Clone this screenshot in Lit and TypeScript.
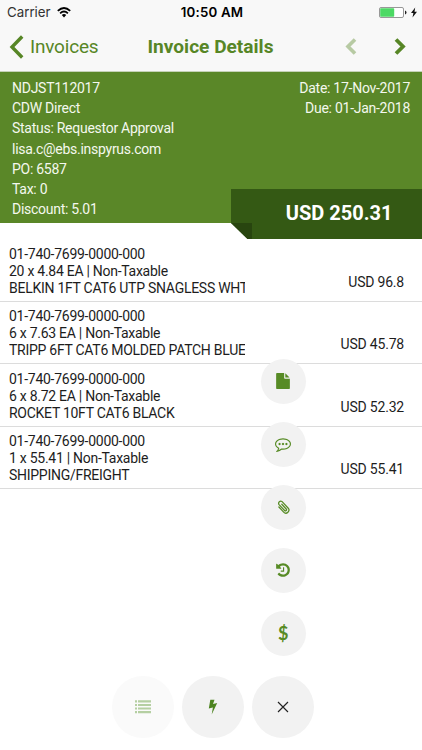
import { LitElement, html, css, svg } from "lit";
import { customElement } from "lit/decorators.js";

interface LineItem {
  account: string;
  quantity: string;
  description: string;
  amount: string;
}

const details = [
  "NDJST112017",
  "CDW Direct",
  "Status: Requestor Approval",
  "lisa.c@ebs.inspyrus.com",
  "PO: 6587",
  "Tax: 0",
  "Discount: 5.01",
];

const items: LineItem[] = [
  { account: "01-740-7699-0000-000", quantity: "20 x 4.84 EA | Non-Taxable", description: "BELKIN 1FT CAT6 UTP SNAGLESS WHT", amount: "USD 96.8" },
  { account: "01-740-7699-0000-000", quantity: "6 x 7.63 EA | Non-Taxable", description: "TRIPP 6FT CAT6 MOLDED PATCH BLUE", amount: "USD 45.78" },
  { account: "01-740-7699-0000-000", quantity: "6 x 8.72 EA | Non-Taxable", description: "ROCKET 10FT CAT6 BLACK", amount: "USD 52.32" },
  { account: "01-740-7699-0000-000", quantity: "1 x 55.41 | Non-Taxable", description: "SHIPPING/FREIGHT", amount: "USD 55.41" },
];

const icon = (size: number, body: unknown, box = "0 0 1792 1792") =>
  html`<svg width=${size} height=${size} viewBox=${box} fill="currentColor">${body}</svg>`;

const fileIcon = icon(16, svg`<path d="M1152 512v-472q22 14 36 28l408 408q14 14 28 36h-472zm-128 32q0 40 28 68t68 28h544v1056q0 40-28 68t-68 28h-1344q-40 0-68-28t-28-68v-1600q0-40 28-68t68-28h800v544z"/>`);
const commentIcon = icon(16, svg`<path d="M640 896q0 53-37.5 90.5t-90.5 37.5-90.5-37.5-37.5-90.5 37.5-90.5 90.5-37.5 90.5 37.5 37.5 90.5zm384 0q0 53-37.5 90.5t-90.5 37.5-90.5-37.5-37.5-90.5 37.5-90.5 90.5-37.5 90.5 37.5 37.5 90.5zm384 0q0 53-37.5 90.5t-90.5 37.5-90.5-37.5-37.5-90.5 37.5-90.5 90.5-37.5 90.5 37.5 37.5 90.5zm-512-512q-204 0-381.5 69.5t-282 187.5-104.5 255q0 112 71.5 213.5t201.5 175.5l87 50-27 96q-24 91-70 172 152-63 275-171l43-38 57 6q69 8 130 8 204 0 381.5-69.5t282-187.5 104.5-255-104.5-255-282-187.5-381.5-69.5zm896 512q0 174-120 321.5t-326 233-450 85.5q-70 0-145-8-198 175-460 242-49 14-114 22h-5q-15 0-27-10.5t-16-27.5v-1q-3-4-.5-12t2-10 4.5-9.5l6-9 7-8.5 8-9q7-8 31-34.5t34.5-38 31-39.5 32.5-51 27-59 26-76q-157-89-247.5-220t-90.5-281q0-130 71-248.5t191-204.5 286-136.5 348-50.5 348 50.5 286 136.5 191 204.5 71 248.5z"/>`);
const clipIcon = icon(16, svg`<path transform="rotate(-43 8 8)" fill="none" stroke="currentColor" stroke-width="1.25" stroke-linecap="round" d="M5 5.2V12.2A3 3 0 0 0 11 12.2V3.2A2.2 2.2 0 0 0 6.8 3.2V11.6A1.1 1.1 0 0 0 9 11.6V5.2"/>`, "0 0 16 16");
const historyIcon = icon(16, svg`<path d="M1664 896q0 156-61 298t-164 245-245 164-298 61q-172 0-327-72.5t-264-204.5q-7-10-6.5-22.5t8.5-20.5l137-138q10-9 25-9 16 2 23 12 73 95 179 147t225 52q104 0 198.5-40.5t163.5-109.5 109.5-163.5 40.5-198.5-40.5-198.5-109.5-163.5-163.5-109.5-198.5-40.5q-98 0-188 35.5t-160 101.5l137 138q31 30 14 69-17 40-59 40h-448q-26 0-45-19t-19-45v-448q0-42 40-59 39-17 69 14l130 129q107-101 244.5-156.5t284.5-55.5q156 0 298 61t245 164 164 245 61 298zm-640-288v448q0 14-9 23t-23 9h-320q-14 0-23-9t-9-23v-64q0-14 9-23t23-9h224v-352q0-14 9-23t23-9h64q14 0 23 9t9 23z"/>`);
const listIcon = icon(16, svg`<path d="M0 1.3h2v2.1H0zM3 1.3h13v2.1H3zM0 4.9h2V7H0zM3 4.9h13V7H3zM0 8.5h2v2.1H0zM3 8.5h13v2.1H3zM0 12.1h2v2.1H0zM3 12.1h13v2.1H3z"/>`, "0 0 16 16");
const boltIcon = icon(16, svg`<path d="M5.3.8h4.2L8 5l4.2-.9L6.7 15.6 7.9 8.4 3.8 9.4z"/>`, "0 0 16 16");
const closeIcon = icon(16, svg`<path d="M3 3l10 10M13 3L3 13" fill="none" stroke="currentColor" stroke-width="1.15"/>`, "0 0 16 16");

@customElement("app-root")
export class AppRoot extends LitElement {
  static styles = css`
    :host {
      display: block;
      position: relative;
      width: 422px;
      height: 750px;
      overflow: hidden;
      background: #fff;
      color: #1d1d1d;
      font-family: Roboto, sans-serif;
      font-size: 14px;
    }
    svg { display: block; flex: none; }
    .top { height: 71px; background: #f8f8f8; border-bottom: 1px solid #c5d2b7; }
    .status {
      display: grid;
      grid-template-columns: 1fr auto 1fr;
      align-items: center;
      height: 24px;
      padding: 0 5px 0 7px;
      color: #111;
      font: 13.3px/24px Inter, sans-serif;
    }
    .carrier { display: flex; align-items: center; gap: 6px; color: #333; }
    .carrier svg { color: #000; }
    .clock { font-weight: 600; letter-spacing: 0.2px; color: #000; }
    .power { display: flex; justify-content: flex-end; align-items: center; gap: 4px; }
    .nav { display: flex; align-items: center; height: 45px; color: #578626; }
    .back { display: flex; align-items: center; gap: 6px; width: 147.5px; padding-left: 9px; box-sizing: border-box; font-size: 19px; letter-spacing: -0.2px; }
    .title { flex: 1; margin: 0; font-size: 19.1px; font-weight: 700; line-height: 45px; }
    .pager { display: flex; gap: 37px; padding-right: 16px; }
    .previous { opacity: 0.4; }
    .summary {
      position: relative;
      display: flex;
      justify-content: space-between;
      height: 145px;
      padding: 6px 12px 0 12px;
      background: #5a8728;
      color: #f4f8ee;
      letter-spacing: -0.27px;
      line-height: 20.2px;
      white-space: nowrap;
    }
    .dates { text-align: right; }
    .total {
      position: absolute;
      right: 0;
      top: 117px;
      width: 191px;
      height: 50px;
      background: #345914;
      color: #fff;
      clip-path: polygon(0 0, 100% 0, 100% 100%, 16.5px 100%, 0 34px);
      font-size: 20px;
      font-weight: 700;
      letter-spacing: 0;
      line-height: 48px;
      text-align: right;
      padding-right: 29.5px;
      box-sizing: border-box;
    }
    .fold { position: absolute; left: 0; bottom: 0; width: 21px; height: 16px; background: #28450f; }
    .items { padding-top: 16.7px; }
    .item {
      display: flex;
      justify-content: space-between;
      height: 62.4px;
      padding: 6.3px 18px 0 9px;
      box-sizing: border-box;
      border-bottom: 1px solid #dcdcdc;
      letter-spacing: -0.27px;
      line-height: 16.9px;
      white-space: nowrap;
    }
    .text { width: 236px; overflow: hidden; }
    .amount { padding-top: 28px; letter-spacing: -0.2px; }
    .menu { position: absolute; left: 260.7px; top: 358.5px; display: flex; flex-direction: column; gap: 18px; color: #578b25; }
    .bar { position: absolute; left: 111.5px; top: 675.5px; display: flex; gap: 7.5px; color: #4d8420; }
    .button { display: flex; align-items: center; justify-content: center; width: 45px; height: 45px; border-radius: 50%; background: #f2f2f2; }
    .large { width: 62.5px; height: 62.5px; }
    .faded { background: #fafafa; color: #b5cfa2; }
    .close { color: #222; }
    .dollar { font: 700 18px/20px Lato, sans-serif; }
  `;

  render() {
    return html`
      <header class="top">
        <div class="status">
          <span class="carrier">Carrier
            <svg width="14" height="11" viewBox="0 0 14 11" fill="none" stroke="currentColor" stroke-width="1.8">
              <path d="M.8 3.9Q7-1.8 13.2 3.9M3.1 6.3Q7 2.8 10.9 6.3"/><path d="M4.8 8.1Q7 6.1 9.2 8.1L7 10.5z" fill="currentColor" stroke="none"/>
            </svg>
          </span>
          <span class="clock">10:50 AM</span>
          <span class="power">
            <svg width="28" height="11" viewBox="0 0 28 11">
              <rect x=".5" y=".5" width="24" height="10" rx="1.5" fill="#fff" stroke="#8c8c8c" stroke-width=".9"/>
              <rect x="1.2" y="1.2" width="14" height="8.6" rx=".7" fill="#4cd964"/>
              <path d="M26 3.5q1.5.5 1.5 2T26 7.5z" fill="#222"/>
            </svg>
            <svg width="6" height="11" viewBox="0 0 6 11"><path d="M4.2.5L0 6h2.4L1.5 10.5 6 4.8H3.5z" fill="#111"/></svg>
          </span>
        </div>
        <nav class="nav">
          <span class="back">
            <svg width="15" height="24" viewBox="0 0 15 24" fill="none" stroke="currentColor" stroke-width="3.4"><path d="M13.2 1.5L3 12l10.2 10.5"/></svg>
            Invoices
          </span>
          <h1 class="title">Invoice Details</h1>
          <span class="pager">
            <svg class="previous" width="12" height="17" viewBox="0 0 12 17" fill="none" stroke="currentColor" stroke-width="3.6"><path d="M10 1.5L3 8.5l7 7"/></svg>
            <svg width="12" height="17" viewBox="0 0 12 17" fill="none" stroke="currentColor" stroke-width="3.8"><path d="M2 1.5l7 7-7 7"/></svg>
          </span>
        </nav>
      </header>
      <section class="summary">
        <div>${details.map((line) => html`<div>${line}</div>`)}</div>
        <div class="dates"><div>Date: 17-Nov-2017</div><div>Due: 01-Jan-2018</div></div>
        <div class="total"><div class="fold"></div>USD 250.31</div>
      </section>
      <main class="items">
        ${items.map((item) => html`
          <div class="item">
            <div class="text"><div>${item.account}</div><div>${item.quantity}</div><div>${item.description}</div></div>
            <div class="amount">${item.amount}</div>
          </div>`)}
      </main>
      <div class="menu">
        <span class="button">${fileIcon}</span>
        <span class="button">${commentIcon}</span>
        <span class="button">${clipIcon}</span>
        <span class="button">${historyIcon}</span>
        <span class="button dollar">$</span>
      </div>
      <div class="bar">
        <span class="button large faded">${listIcon}</span>
        <span class="button large">${boltIcon}</span>
        <span class="button large close">${closeIcon}</span>
      </div>
    `;
  }
}
